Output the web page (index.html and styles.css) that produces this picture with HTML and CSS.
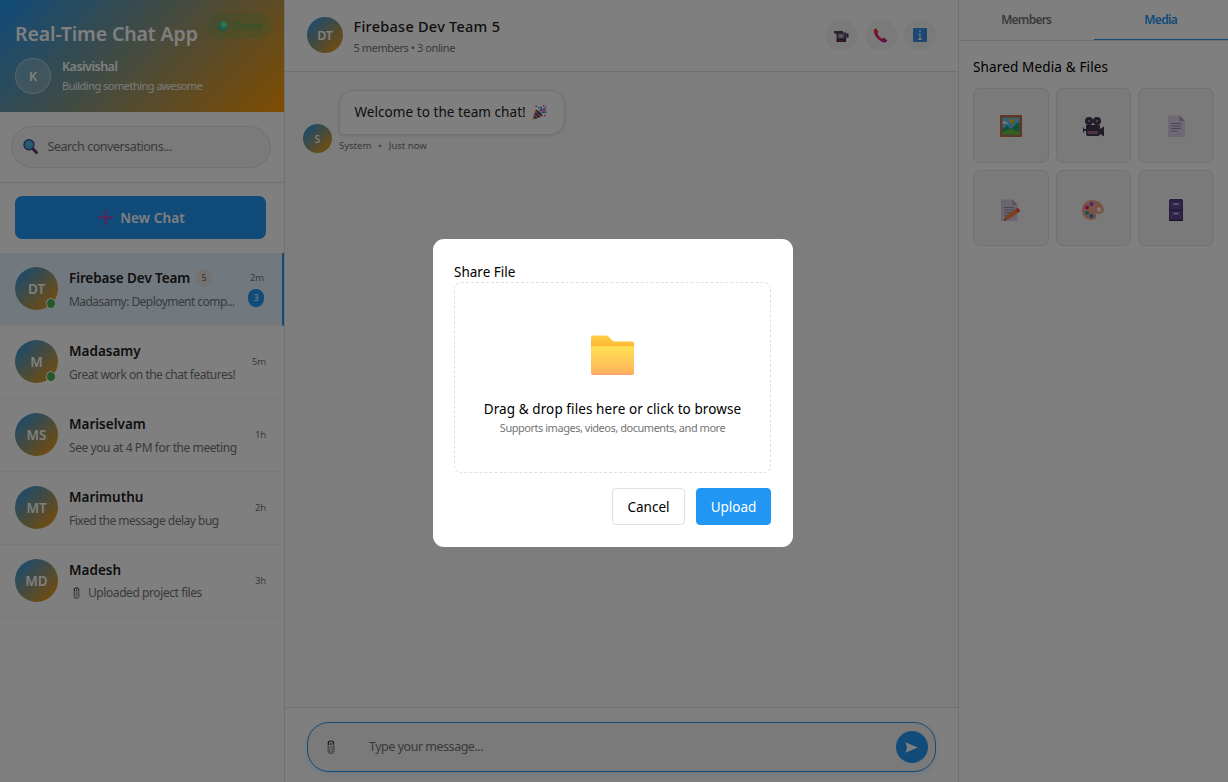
FILE: index.html
```html
<!DOCTYPE html>
<html lang="en">
<head>
<meta charset="utf-8">
<title>Real-Time Chat App</title>
<link rel="stylesheet" href="styles.css">
</head>
<body>
<svg class="defs" width="0" height="0" aria-hidden="true">
  <defs>
    <linearGradient id="gFolder" x1="0" y1="0" x2="0" y2="1"><stop offset="0" stop-color="#ffe152"/><stop offset=".9" stop-color="#ffb65c"/><stop offset="1" stop-color="#ff9d70"/></linearGradient>
    <linearGradient id="gFolderBack" x1="0" y1="0" x2="0" y2="1"><stop offset="0" stop-color="#ffcf48"/><stop offset=".6" stop-color="#fdb52e"/></linearGradient>
    <linearGradient id="gPhone" x1="0" y1="0" x2="1" y2="1"><stop offset="0" stop-color="#f8312f"/><stop offset="1" stop-color="#c0209c"/></linearGradient>
    <linearGradient id="gInfo" x1="0" y1="0" x2="1" y2="1"><stop offset="0" stop-color="#3595ea"/><stop offset="1" stop-color="#3f86dc"/></linearGradient>
    <radialGradient id="gOnline" cx=".6" cy=".35" r=".7"><stop offset="0" stop-color="#7df0a8"/><stop offset="1" stop-color="#22a38c"/></radialGradient>
    <symbol id="clip" viewBox="0 0 8 14"><path d="M2 4.500v5.700a2 2 0 0 0 4 0V5M1 6v5a3 2.600 0 0 0 6 0V5M4 6v4.500" fill="none" stroke="#6e6875" stroke-width=".8"/><path d="M1.300 5V3a2.600 2 0 0 1 5.200 0v1.500M4 3v2" fill="none" stroke="#26222c" stroke-width="1.200"/></symbol>
  </defs>
</svg>
<div class="app">
  <aside class="sidebar">
    <header class="brand">
      <h1 class="brand-title">Real-Time Chat App</h1>
      <div class="profile">
        <div class="profile-avatar">K</div>
        <div class="profile-text">
          <div class="profile-name">Kasivishal</div>
          <div class="profile-status">Building something awesome</div>
        </div>
      </div>
      <div class="online-pill">
        <svg width="10" height="10" viewBox="0 0 10 10"><circle cx="5" cy="5" r="5" fill="url(#gOnline)"/></svg>
        <span>Online</span>
      </div>
    </header>
    <div class="search-area">
      <div class="search">
        <svg width="15" height="15" viewBox="0 0 15 15"><path d="M9.500 9.500l4 4" stroke="#6d2a70" stroke-width="3" stroke-linecap="round"/><circle cx="6" cy="5.800" r="5" fill="#4ab8dc" stroke="#3d4f96" stroke-width="1.400"/></svg>
        <span class="search-text">Search conversations...</span>
      </div>
    </div>
    <div class="new-area">
      <button class="new-chat">
        <svg width="15" height="15" viewBox="0 0 15 15"><path d="M7.500 1v13M1 7.500h13" stroke="#9450b8" stroke-width="2.400" stroke-linecap="round"/><path d="M6.900 1v12.500M1 6.900h13" stroke="#b565b4" stroke-width=".6"/></svg>
        <span>New Chat</span>
      </button>
    </div>
    <ul class="chats">
      <li class="chat active">
        <div class="avatar">DT<i class="dot"></i></div>
        <div class="chat-body"><div class="chat-name"><span class="team">Firebase Dev Team</span><b class="count">5</b></div><div class="preview tight">Madasamy: Deployment comp...</div></div>
        <div class="meta"><span class="time">2m</span><b class="unread">3</b></div>
      </li>
      <li class="chat">
        <div class="avatar">M<i class="dot"></i></div>
        <div class="chat-body"><div class="chat-name">Madasamy</div><div class="preview">Great work on the chat features!</div></div>
        <div class="meta"><span class="time">5m</span></div>
      </li>
      <li class="chat">
        <div class="avatar">MS</div>
        <div class="chat-body"><div class="chat-name">Mariselvam</div><div class="preview loose">See you at 4 PM for the meeting</div></div>
        <div class="meta"><span class="time">1h</span></div>
      </li>
      <li class="chat">
        <div class="avatar">MT</div>
        <div class="chat-body"><div class="chat-name">Marimuthu</div><div class="preview">Fixed the message delay bug</div></div>
        <div class="meta"><span class="time">2h</span></div>
      </li>
      <li class="chat">
        <div class="avatar">MD</div>
        <div class="chat-body file-body"><div class="chat-name">Madesh</div><div class="preview loose file"><svg width="7" height="12"><use href="#clip"/></svg><span>Uploaded project files</span></div></div>
        <div class="meta"><span class="time">3h</span></div>
      </li>
    </ul>
  </aside>

  <main class="conversation">
    <header class="room">
      <div class="avatar room-avatar">DT</div>
      <div class="room-text">
        <div class="room-name">Firebase Dev Team 5</div>
        <div class="room-sub">5 members • 3 online</div>
      </div>
      <div class="actions">
        <button class="round"><svg class="camera" width="15" height="11" viewBox="0 0 15 11"><path d="M0 0h9v1.500h3V4H2.500V2.500H0z" fill="#4b4257"/><rect x="2.500" y="2" width="10" height="6" fill="#5b5168"/><rect x="4.500" y="3.300" width="5" height="3.400" fill="#b5aec0"/><path d="M12.500 2.500h2v4h-2zM2.500 8h9.500v3H2.500z" fill="#3b3046"/><path d="M4.500 9.500h5.500" stroke="#8c2d5c"/></svg></button>
        <button class="round"><svg width="15" height="15" viewBox="0 0 15 15"><path d="M2.700.3C1 1 .4 2.800 1 4.800c1.300 4.300 4.500 7.800 8.700 9.400 2 .7 3.800 0 4.700-1.700l-3.700-2.900-1.900 1.100C7 9.500 5.400 7.700 4.500 5.600l1.100-1.800z" fill="url(#gPhone)"/></svg></button>
        <button class="round"><svg width="14" height="14" viewBox="0 0 14 14"><rect width="14" height="14" rx="1" fill="url(#gInfo)"/><path d="M7 2v2M5.500 6H7v5M5 11.300h4" fill="none" stroke="#e7f2ff" stroke-width="1.200"/></svg></button>
      </div>
    </header>
    <section class="messages">
      <div class="avatar msg-avatar">S</div>
      <div class="msg">
        <div class="bubble"><span>Welcome to the team chat!</span>
          <svg width="15" height="15" viewBox="0 0 15 15"><path d="M3.500 4.500L10.500 11 1.500 14.500q-1.500.3-1-.8z" fill="#f4a72c"/><path d="M3 8l4.300 4.500M2 11l2.500 2.700" stroke="#5b47b8" stroke-width="1.900"/><path d="M3.700 4.500q2.300.5 4.500 2.500t2.500 4.500q-2.300-.5-4.500-2.500t-2.500-4.500" fill="#71437b"/><path d="M8 6q2-2 .7-4.500M10 8q2-1.500 4.500-.5" fill="none" stroke="#2c8fe6" stroke-width="1.500"/><path d="M9.500 6.500L13 3" stroke="#f04aa0" stroke-width="1.700"/><path d="M3.500 1.200h1.500M11 .8h1.500M12.500 5h1.500M12 10.500h1.500" stroke="#e3439a" stroke-width="1.500"/><path d="M6 2.500h1.500M13.500 2h1" stroke="#36aaf0" stroke-width="1.500"/></svg>
        </div>
        <div class="msg-meta"><span>System</span><span>•</span><span>Just now</span></div>
      </div>
    </section>
    <footer class="composer">
      <div class="composer-box">
        <svg class="attach" width="8" height="14"><use href="#clip"/></svg>
        <span class="composer-text">Type your message...</span>
        <button class="send"><svg width="13" height="11" viewBox="0 0 13 11"><path d="M.3.3L12.800 5.500.3 10.700 2.200 5.500z" fill="#fff"/></svg></button>
      </div>
    </footer>
  </main>

  <aside class="details">
    <nav class="tabs"><div class="tab">Members</div><div class="tab selected">Media</div></nav>
    <section class="media">
      <h2 class="media-title">Shared Media &amp; Files</h2>
      <div class="grid">
        <div class="tile"><svg width="22" height="22" viewBox="0 0 22 22"><rect width="22" height="22" rx=".8" fill="#c66d42"/><rect x="2.500" y="2.500" width="17" height="17" fill="#62c6e8"/><path d="M2.500 6.500q2-1.500 3.500.5 2-.3 2 2H2.500z" fill="#d8effa"/><circle cx="12" cy="6" r="2.300" fill="#f7b51c"/><path d="M2.500 14L7 10.500l4 3.500 6-6 2.500-.5v12h-17z" fill="#25a36c"/><path d="M2.500 17q9-5 17 .5v2h-17z" fill="#67bf43"/></svg></div>
        <div class="tile film"><svg width="22" height="20" viewBox="0 0 22 20"><g fill="#42364f"><circle cx="6" cy="4" r="4"/><circle cx="14" cy="4" r="4"/><path d="M3 8h13q1 0 1 1v8q0 2-2 2H5q-2 0-2-2v-3H1v1.500H0v-5h1V12h2zM17 12l4-2.500v10L17 17z"/></g><circle cx="6" cy="4" r="1.300" fill="#8a8096"/><circle cx="14" cy="4" r="1.300" fill="#8a8096"/><rect x="4.500" y="14" width="10" height="3" fill="#8d8398"/><path d="M6 15.500h2.500M10 15.500h2.500" stroke="#d62c64" stroke-width="1.300"/></svg></div>
        <div class="tile"><svg width="17" height="22" viewBox="0 0 17 22"><path d="M0 .5h11.500L17 6v16H0z" fill="#dccfe8"/><path d="M11.500.5L17 6h-5.500z" fill="#a99bb9"/><path d="M3 8.500h10M3 11h10M3 13.500h10M3 16h6.500" stroke="#8f829d" stroke-width=".9"/></svg></div>
        <div class="tile low"><svg width="20" height="22" viewBox="0 0 20 22"><path d="M0 .5h11.500L16.500 6v16H0z" fill="#d6cae2"/><path d="M11.500.5L16.500 6h-5z" fill="#a99bb9"/><path d="M3 8.500h10M3 11h10M3 13.500h8M3 16h5" stroke="#8f829d" stroke-width=".9"/><path d="M3 21.500l1.500-4.500L14 10.500l2.500 3.500L7 20.800z" fill="#f2893a"/><path d="M14 10.500l2.800-1.800 2.700 3.300-3 2z" fill="#f05346"/><path d="M3 21.500l.6-2 1.300 1.500z" fill="#50364a"/></svg></div>
        <div class="tile low"><svg width="22" height="20" viewBox="0 0 22 20"><path fill-rule="evenodd" d="M10 0C4 0 0 4.500 0 10s4 10 9.500 10c3 0 4.800-1.400 4.800-3 0-1.500-.8-2.200-.2-3 1-1 7.700 1.500 7.700-4C21.800 4 16.500 0 10 0zm7 7.500a2 2 0 1 1 0 4 2 2 0 0 1 0-4z" fill="#f3a687"/><circle cx="17" cy="9.500" r="2" fill="#f5f5f5"/><circle cx="9.500" cy="4" r="2" fill="#9a4ce0"/><circle cx="5" cy="7.500" r="2" fill="#d52a78"/><circle cx="5" cy="13" r="2" fill="#27a6a5"/><circle cx="9.500" cy="16" r="2" fill="#2b83d8"/></svg></div>
        <div class="tile low"><svg width="14" height="22" viewBox="0 0 14 22"><path d="M1 0h12l1 1.500V22H0V1.500z" fill="#503c78"/><rect x="1" y="2.500" width="12" height="7.500" fill="#644b99"/><rect x="1" y="12" width="12" height="8" fill="#644b99"/><path d="M0 11h14M0 21.500h14" stroke="#34264e"/><path d="M4.500 5h5M4.500 14.500h5" stroke="#d4c7e8" stroke-width="1.600"/></svg></div>
      </div>
    </section>
  </aside>

  <div class="overlay">
    <div class="modal">
      <h3 class="modal-title">Share File</h3>
      <div class="drop">
        <svg width="43" height="41" viewBox="0 0 43 41"><path d="M0 2.500Q0 .5 2 .5h13q1.500 0 2.500 1l4 4.200q.8.800 2 .8H41q2 0 2 2V20H0z" fill="url(#gFolderBack)"/><path d="M0 13q0-1.700 1.700-1.700h39.600Q43 11.300 43 13v25q0 2-2 2H2Q0 40 0 38z" fill="url(#gFolder)"/></svg>
        <div class="drop-title">Drag &amp; drop files here or click to browse</div>
        <div class="drop-sub">Supports images, videos, documents, and more</div>
      </div>
      <div class="modal-actions"><button class="btn">Cancel</button><button class="btn primary">Upload</button></div>
    </div>
  </div>
</div>
</body>
</html>
```

FILE: styles.css
```css
* { box-sizing: border-box; margin: 0; padding: 0; }
body { font-family: "Noto Sans", "Open Sans", sans-serif; font-size: 14px; color: #000; background: #fff; overflow: hidden; }
button { font: inherit; border: 0; letter-spacing: inherit; }
svg { display: block; flex: none; }
.defs { position: absolute; }
.app { position: relative; display: flex; width: 1228px; height: 782px; }

.sidebar { width: 285px; flex: none; border-right: 1px solid #e0e0e0; background: #fff; }
.brand { position: relative; height: 112px; padding: 20px 15px 0; color: #fff; background: linear-gradient(135deg, #2196f3 0%, #ff9800 100%); }
.brand-title { font-size: 19.500px; line-height: 28px; font-weight: 600; letter-spacing: -.12px; white-space: nowrap; }
.profile { display: flex; gap: 11px; align-items: center; margin-top: 8px; }
.profile-avatar { display: flex; align-items: center; justify-content: center; width: 36px; height: 36px; border: 1px solid rgba(255,255,255,.35); border-radius: 50%; background: rgba(255,255,255,.2); font-size: 12.500px; font-weight: 600; }
.profile-text { padding-top: 2px; }
.profile-name { font-size: 12.500px; line-height: 18px; font-weight: 600; letter-spacing: -.5px; }
.profile-status { font-size: 11px; line-height: 20px; opacity: .9; letter-spacing: -.51px; }
.online-pill { position: absolute; top: 14px; left: 209px; display: flex; gap: 5px; align-items: center; justify-content: center; width: 62px; height: 24px; border: 1px solid rgba(76,175,80,.3); border-radius: 12px; background: rgba(76,175,80,.2); color: #4caf50; font-size: 10px; letter-spacing: -.3px; }

.search-area { height: 71px; padding: 14px 13px 0 11px; border-bottom: 1px solid #e0e0e0; }
.search { display: flex; align-items: center; gap: 9.500px; height: 42px; padding: 0 0 1px 11px; border: 1px solid #e0e0e0; border-radius: 21px; background: #f5f5f5; color: #757575; font-size: 12.500px; letter-spacing: -.45px; }
.new-area { padding: 13px 18px 14px 15px; }
.new-chat { display: flex; align-items: center; justify-content: center; gap: 7px; width: 100%; height: 43px; padding-left: 2px; border-radius: 7px; color: #fff; background: #2196f3; font-size: 13.500px; font-weight: 600; letter-spacing: .1px; }
.chats { list-style: none; }
.chat { display: flex; align-items: center; height: 73px; padding: 0 18px 1px 15px; border-bottom: 1px solid #f0f0f0; }
.chat.active { background: #e3f2fd; border-right: 2px solid #2196f3; }
.avatar { position: relative; display: flex; align-items: center; justify-content: center; flex: none; width: 43px; height: 43px; border-radius: 50%; color: #fff; background: linear-gradient(135deg, #2196f3, #ff9800); font-size: 13.500px; font-weight: 600; }
.dot { position: absolute; right: 2px; bottom: 1px; width: 10px; height: 11px; border: 1px solid #fff; border-radius: 50%; background: #4caf50; }
.chat-body { width: 172px; margin-left: 11px; padding-top: 3px; white-space: nowrap; flex: none; }
.file-body { padding-top: 2px; }
.chat-name { display: flex; gap: 6px; align-items: center; height: 20px; font-size: 13.500px; font-weight: 600; line-height: 20px; color: #212121; }
.team { letter-spacing: -.1px; }
.preview { margin-top: 4px; font-size: 12px; line-height: 20px; color: #757575; letter-spacing: -.5px; }
.preview.tight { letter-spacing: -.55px; }
.preview.loose { letter-spacing: -.42px; }
.preview.file { display: flex; align-items: center; gap: 8px; margin-top: 3px; padding-left: 4px; }
.count { width: 16px; height: 18px; border-radius: 9px; background: #e8e4e0; color: #757575; font-size: 9px; line-height: 18px; font-weight: 500; text-align: center; }
.meta { display: flex; flex-direction: column; align-items: flex-end; gap: 3px; margin-left: auto; }
.time { font-size: 9.500px; line-height: 16px; color: #757575; letter-spacing: -.2px; }
.unread { width: 16px; height: 18px; border-radius: 9px; background: #2196f3; color: #fff; font-size: 9px; line-height: 18px; font-weight: 400; text-align: center; }

.conversation { display: flex; flex-direction: column; width: 673px; flex: none; background: #fafafa; }
.room { display: flex; align-items: center; height: 72px; padding: 0 22px 1px; border-bottom: 1px solid #e0e0e0; background: #fff; }
.room-avatar { width: 36px; height: 36px; font-size: 12.500px; letter-spacing: -.2px; }
.room-text { margin-left: 10.500px; padding-top: 3px; }
.room-name { font-size: 14.500px; line-height: 21px; font-weight: 500; color: #212121; letter-spacing: .26px; }
.room-sub { font-size: 11px; line-height: 21px; color: #757575; letter-spacing: -.42px; }
.actions { display: flex; gap: 7.500px; margin-left: auto; }
.round { display: flex; align-items: center; justify-content: center; width: 32px; height: 32px; border-radius: 50%; background: #f5f5f5; }
.camera { margin-top: 3px; }
.messages { display: flex; align-items: flex-start; flex: 1; padding: 18px 18px 0; }
.msg-avatar { width: 29px; height: 29px; margin-top: 34px; font-size: 10.500px; font-weight: 500; }
.msg { margin-left: 7px; }
.bubble { display: flex; align-items: center; gap: 6.500px; width: 226px; height: 45px; padding: 0 0 1px 14.500px; border: 1px solid #e0e0e0; border-radius: 15px 15px 15px 4px; background: #fff; box-shadow: 0 1px 3px rgba(0,0,0,.1); color: #212121; font-size: 13.500px; letter-spacing: .06px; white-space: nowrap; }
.msg-meta { display: flex; gap: 7px; margin-top: 3px; color: #757575; font-size: 9.500px; line-height: 15px; }
.composer { height: 75px; padding: 14px 22px 0; border-top: 1px solid #e0e0e0; background: #fff; }
.composer-box { display: flex; align-items: center; height: 50px; padding: 0 7px 0 19px; border: 1px solid #2196f3; border-radius: 22px; background: #f5f5f5; box-shadow: 0 2px 8px rgba(33,150,243,.15); }
.composer-text { margin-left: 34px; padding-bottom: 2px; color: #757575; font-size: 12.500px; letter-spacing: -.48px; }
.send { display: flex; align-items: center; justify-content: center; width: 32px; height: 32px; margin-left: auto; padding-right: 1px; border-radius: 50%; background: #2196f3; }

.details { width: 270px; flex: none; border-left: 1px solid #e0e0e0; background: #fff; }
.tabs { display: flex; height: 41px; border-bottom: 1px solid #e0e0e0; }
.tab { flex: 1; height: 40px; font-size: 12px; line-height: 40px; font-weight: 600; text-align: center; color: #757575; letter-spacing: -.75px; }
.tab.selected { color: #2196f3; border-bottom: 1px solid #2196f3; letter-spacing: -.6px; }
.media { padding: 15px 14px; }
.media-title { font-size: 13.500px; line-height: 22px; font-weight: 400; letter-spacing: .15px; }
.grid { display: grid; grid-template-columns: repeat(3, 1fr); gap: 7px; margin-top: 10px; }
.tile { display: flex; align-items: center; justify-content: center; height: 75.400px; border: 1px solid #e0e0e0; border-radius: 7px; background: #f5f5f5; }
.tile.low { padding-top: 3px; }
.tile.film { padding: 3px 0 0 1px; }

.overlay { position: absolute; inset: 0; display: flex; justify-content: center; padding: 239px 2px 0 0; background: rgba(0,0,0,.5); }
.modal { width: 360px; height: 308px; padding: 23px 22px 0 21px; border-radius: 11px; background: #fff; }
.modal-title { font-size: 13.500px; line-height: 20px; font-weight: 400; }
.drop { display: flex; flex-direction: column; align-items: center; height: 191px; padding-top: 52px; border: 1px dashed #e0e0e0; border-radius: 7px; }
.drop-title { margin-top: 23px; font-size: 13.500px; line-height: 20px; letter-spacing: .09px; white-space: nowrap; }
.drop-sub { font-size: 11px; line-height: 18px; color: #757575; letter-spacing: -.47px; white-space: nowrap; }
.modal-actions { display: flex; justify-content: flex-end; gap: 11px; margin-top: 15px; }
.btn { width: 73px; height: 37px; border: 1px solid #e0e0e0; border-radius: 4px; color: #000; background: #fff; font-size: 13.500px; }
.btn.primary { width: 75px; border-color: #2196f3; color: #fff; background: #2196f3; }
```
